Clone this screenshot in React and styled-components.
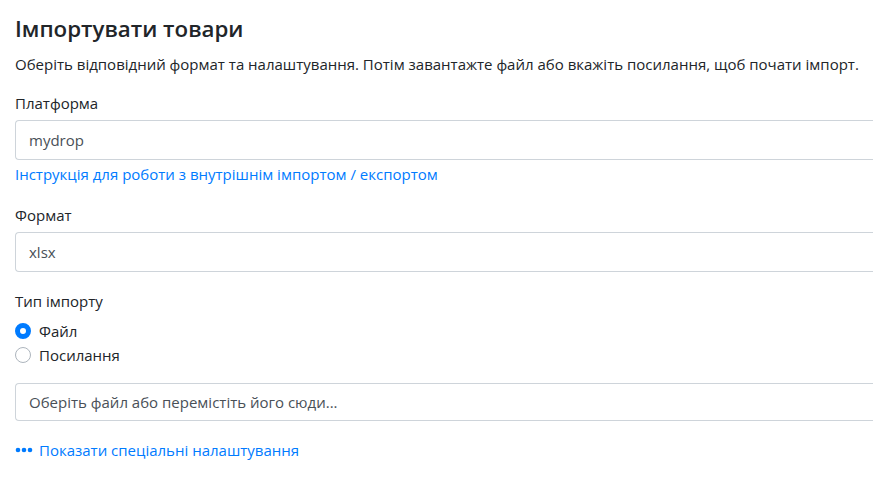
import React from "react";
import styled, { createGlobalStyle } from "styled-components";

const Global = createGlobalStyle`
  html, body { margin: 0; padding: 0; background: #fff; overflow: hidden; }
  body { font-family: "Segoe UI", "Open Sans", "Noto Sans", sans-serif; color: #212529; }
`;

const Page = styled.div`
  width: 100%;
  padding: 14px 0 20px 15px;
  box-sizing: border-box;
`;

const Title = styled.h1`
  margin: 0;
  font-size: 22.3px;
  font-weight: 600;
  line-height: 29px;
  color: #212529;
`;

const Lead = styled.p`
  margin: 10px 0 0;
  font-size: 15px;
  line-height: 22px;
  color: #212529;
`;

const Group = styled.div`
  margin-top: ${(p) => p.$top}px;
  display: flex;
  flex-direction: column;
`;

const Label = styled.label`
  font-size: 15px;
  line-height: 22px;
  margin-bottom: ${(p) => p.$gap ?? 6}px;
`;

const Field = styled.div`
  height: ${(p) => p.$h ?? 40}px;
  box-sizing: border-box;
  border: 1px solid #ced4da;
  border-right: none;
  border-radius: 4px 0 0 4px;
  padding: 0 13px;
  display: flex;
  align-items: center;
  font-size: 15px;
  color: #495057;
  background: #fff;
`;

const Link = styled.a`
  color: #007bff;
  font-size: 15px;
  line-height: 24px;
  text-decoration: none;
  cursor: pointer;
  display: flex;
  align-items: center;
  gap: 6px;
  margin-top: ${(p) => p.$top ?? 0}px;
`;

const RadioRow = styled.label`
  display: flex;
  align-items: center;
  gap: 8px;
  height: 24px;
  font-size: 15px;
`;

const RadioDot = styled.span`
  width: 16px;
  height: 16px;
  box-sizing: border-box;
  border-radius: 50%;
  border: ${(p) => (p.$on ? "5px solid #007bff" : "1px solid #adb5bd")};
  background: #fff;
  flex: none;
`;

const Dots = styled.svg`
  flex: none;
`;

export default function App() {
  return (
    <>
      <Global />
      <Page>
        <Title>Імпортувати товари</Title>
        <Lead>
          Оберіть відповідний формат та налаштування. Потім завантажте файл або вкажіть посилання, щоб почати імпорт.
        </Lead>

        <Group $top={17}>
          <Label>Платформа</Label>
          <Field>mydrop</Field>
          <Link $top={2}>Інструкція для роботи з внутрішнім імпортом / експортом</Link>
        </Group>

        <Group $top={18}>
          <Label>Формат</Label>
          <Field>xlsx</Field>
        </Group>

        <Group $top={18}>
          <Label $gap={7}>Тип імпорту</Label>
          <RadioRow>
            <RadioDot $on />
            Файл
          </RadioRow>
          <RadioRow>
            <RadioDot />
            Посилання
          </RadioRow>
        </Group>

        <Group $top={16}>
          <Field $h={38}>Оберіть файл або перемістіть його сюди...</Field>
        </Group>

        <Group $top={17}>
          <Link>
            <Dots width="18" height="6" viewBox="0 0 18 6">
              <circle cx="3" cy="3" r="2.3" fill="#007bff" />
              <circle cx="9" cy="3" r="2.3" fill="#007bff" />
              <circle cx="15" cy="3" r="2.3" fill="#007bff" />
            </Dots>
            Показати спеціальні налаштування
          </Link>
        </Group>
      </Page>
    </>
  );
}
